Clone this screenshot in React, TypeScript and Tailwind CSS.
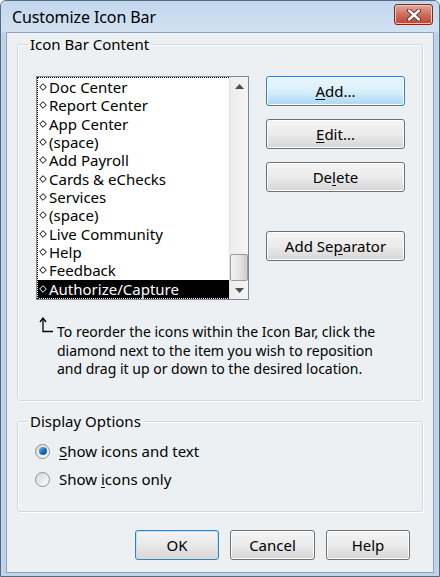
import React from 'react';

const items = [
  'Doc Center',
  'Report Center',
  'App Center',
  '(space)',
  'Add Payroll',
  'Cards & eChecks',
  'Services',
  '(space)',
  'Live Community',
  'Help',
  'Feedback',
  'Authorize/Capture',
];

const Diamond = ({ light }: { light?: boolean }) => (
  <svg width="8" height="8" viewBox="0 0 8 8" className="mr-[2px] shrink-0">
    <path d="M4 0.7 L7.3 4 L4 7.3 L0.7 4 Z" fill={light ? '#000' : '#fff'} stroke={light ? '#fff' : '#000'} strokeWidth="1" />
  </svg>
);

const Btn = ({ children, active, def, className = '' }: { children: React.ReactNode; active?: boolean; def?: boolean; className?: string }) => (
  <div
    className={
      'h-[30px] flex items-center justify-center rounded-[3px] border text-[15px] text-black ' +
      (active
        ? 'border-[#3c7fb1] bg-gradient-to-b from-[#eaf6fd] via-[#d9f0fc] to-[#a7d9f5] shadow-[inset_0_0_0_1px_#fff]'
        : def
        ? 'border-[#3c7fb1] bg-gradient-to-b from-[#f4f4f4] via-[#e9e9e9] to-[#d6d6d6] shadow-[inset_0_0_0_1px_#b8e4fa]'
        : 'border-[#707070] bg-gradient-to-b from-[#f4f4f4] via-[#ebebeb] to-[#d6d6d6] shadow-[inset_0_0_0_1px_#fff]') +
      ' ' +
      className
    }
  >
    {children}
  </div>
);

const Radio = ({ checked }: { checked?: boolean }) => (
  <div className="w-[15px] h-[15px] rounded-full border border-[#8e8f8f] bg-gradient-to-br from-[#d6d6d6] to-[#ffffff] flex items-center justify-center shrink-0">
    {checked && <div className="w-[8px] h-[8px] rounded-full bg-gradient-to-br from-[#7fc2ef] via-[#1b74b9] to-[#0e4f8a]" />}
  </div>
);

export default function App() {
  return (
    <div className="w-[440px] h-[577px] flex flex-col bg-[#bfd4ea] border border-[#566a80] rounded-t-[6px] font-['Noto_Sans',sans-serif] text-black overflow-hidden">
      {/* Title bar */}
      <div className="h-[31px] flex items-center justify-between pl-[11px] pr-[6px] bg-gradient-to-b from-[#c2d7ee] to-[#d3e2f2] shrink-0">
        <span className="text-[16px] tracking-[-0.1px]">Customize Icon Bar</span>
        <div className="w-[39px] h-[21px] mt-[-4px] rounded-[3px] border border-[#6d2e27] bg-gradient-to-b from-[#e8a89c] via-[#cd6d5e] to-[#c0432f] flex items-center justify-center shadow-[inset_0_0_0_1px_#f2c4bb]">
          <svg width="16" height="12" viewBox="0 0 16 12">
            <path d="M3 1.5 L13 10.5 M13 1.5 L3 10.5" stroke="#5a2520" strokeWidth="4.2" strokeLinecap="round" />
            <path d="M3 1.5 L13 10.5 M13 1.5 L3 10.5" stroke="#fff" strokeWidth="2.4" strokeLinecap="round" />
          </svg>
        </div>
      </div>

      {/* Client area */}
      <div className="flex-1 mx-[5px] mb-[3px] border border-[#8ea3b9] bg-[#ecf0f3] flex flex-col px-[10px]">
        <fieldset className="mt-[1px] h-[367px] border border-[#cfd8df] rounded-[3px] shadow-[inset_1px_1px_0_#fff,1px_1px_0_#fff] pl-[18px] pr-[17px] pt-[22px]">
          <legend className="-ml-[8px] px-[2px] text-[15px] leading-[20px]">Icon Bar Content</legend>
          <div className="flex gap-[17px]">
            {/* List box */}
            <div className="w-[213px] h-[224px] border border-[#828790] bg-white flex">
              <div className="flex-1 border border-dotted border-black border-r-0 flex flex-col">
                {items.map((it, i) => {
                  const sel = i === items.length - 1;
                  return (
                    <div
                      key={i}
                      className={
                        'h-[18.5px] flex items-center text-[15px] leading-[18px] pl-[1px] ' +
                        (sel ? 'bg-black text-white' : 'text-black')
                      }
                    >
                      <Diamond light={sel} />
                      {it}
                    </div>
                  );
                })}
              </div>
              {/* Scrollbar */}
              <div className="w-[19px] bg-gradient-to-r from-[#ececec] to-[#f5f5f5] border-l border-[#e3e3e3] flex flex-col items-center">
                <div className="h-[18px] flex items-center justify-center">
                  <svg width="9" height="5" viewBox="0 0 9 5"><path d="M0 5 L4.5 0 L9 5 Z" fill="#4d4d4d" /></svg>
                </div>
                <div className="flex-1" />
                <div className="w-[18px] h-[27px] rounded-[2px] border border-[#9a9a9a] bg-gradient-to-r from-[#f3f3f3] via-[#e6e6e6] to-[#cfcfcf]" />
                <div className="h-[18px] flex items-center justify-center">
                  <svg width="9" height="5" viewBox="0 0 9 5"><path d="M0 0 L9 0 L4.5 5 Z" fill="#4d4d4d" /></svg>
                </div>
              </div>
            </div>

            {/* Buttons */}
            <div className="w-[139px] flex flex-col">
              <Btn active>
                <span><span className="underline underline-offset-2">A</span>dd...</span>
              </Btn>
              <Btn className="mt-[13px]">
                <span><span className="underline underline-offset-2">E</span>dit...</span>
              </Btn>
              <Btn className="mt-[13px]">
                <span>De<span className="underline underline-offset-2">l</span>ete</span>
              </Btn>
              <Btn className="mt-[39px]">
                <span>Add Se<span className="underline underline-offset-2">p</span>arator</span>
              </Btn>
            </div>
          </div>

          {/* Hint */}
          <div className="flex mt-[23px] ml-[3px]">
            <svg width="15" height="16" viewBox="0 0 15 16" className="shrink-0 mt-[-6px]">
              <path d="M4 2 L4 14.5 L14 14.5" stroke="#000" strokeWidth="1.3" fill="none" />
              <path d="M1 5 L4 1 L7 5" stroke="#000" strokeWidth="1.3" fill="none" />
            </svg>
            <p className="ml-[3px] text-[14px] leading-[18.5px] w-[330px]">
              To reorder the icons within the Icon Bar, click the diamond next to the item you wish to reposition and drag it up or down to the desired location.
            </p>
          </div>
        </fieldset>

        <fieldset className="mt-[10px] h-[101px] border border-[#cfd8df] rounded-[3px] shadow-[inset_1px_1px_0_#fff,1px_1px_0_#fff] pl-[17px] pt-[11px]">
          <legend className="-ml-[7px] px-[2px] text-[15px] leading-[20px]">Display Options</legend>
          <div className="flex items-center gap-[9px] h-[18px]">
            <Radio checked />
            <span className="text-[15px]"><span className="underline underline-offset-2">S</span>how icons and text</span>
          </div>
          <div className="flex items-center gap-[9px] h-[18px] mt-[10px]">
            <Radio />
            <span className="text-[15px]">Show <span className="underline underline-offset-2">i</span>cons only</span>
          </div>
        </fieldset>

        <div className="flex justify-end gap-[11px] mt-[18px] pr-[13px]">
          <Btn def className="w-[84px]">OK</Btn>
          <Btn className="w-[85px]">Cancel</Btn>
          <Btn className="w-[84px]">Help</Btn>
        </div>
      </div>
    </div>
  );
}
